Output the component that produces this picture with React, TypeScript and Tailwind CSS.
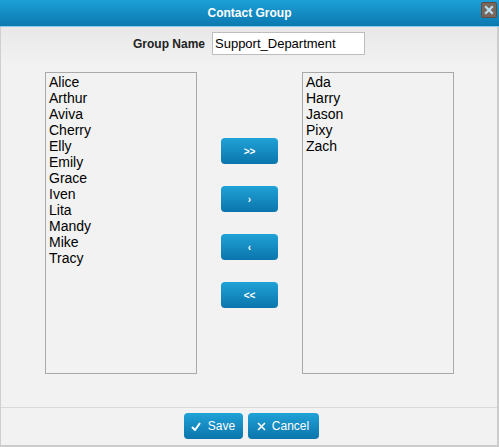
import React from 'react';

const leftNames = ['Alice', 'Arthur', 'Aviva', 'Cherry', 'Elly', 'Emily', 'Grace', 'Iven', 'Lita', 'Mandy', 'Mike', 'Tracy'];
const rightNames = ['Ada', 'Harry', 'Jason', 'Pixy', 'Zach'];

const blueBtn =
  'bg-gradient-to-b from-[#20a2d8] to-[#0a75ab] text-white rounded-[4px] flex items-center justify-center';

function NameList({ names }: { names: string[] }) {
  return (
    <div className="w-[152px] h-[302px] border border-[#a9a9a9] bg-[#f2f2f2] pl-[3px] pt-[1px]">
      {names.map((n) => (
        <div key={n} className="text-[14px] leading-4 text-black">
          {n}
        </div>
      ))}
    </div>
  );
}

export default function App() {
  const moves = ['>>', '›', '‹', '<<'];

  return (
    <div
      className="w-[499px] h-[447px] flex flex-col bg-[#f2f2f2] overflow-hidden"
      style={{ fontFamily: '"Liberation Sans", Arial, sans-serif' }}
    >
      {/* title bar */}
      <div className="relative h-[26px] shrink-0 bg-gradient-to-b from-[#1ca0d7] to-[#0b79b0] flex items-center justify-center">
        <span className="text-white text-[12px] font-bold">Contact Group</span>
        <div className="absolute right-[2px] top-[2px] w-[16px] h-[16px] rounded-[2px] bg-[#7a675c] border border-[#5d4d44] flex items-center justify-center">
          <svg width="10" height="10" viewBox="0 0 10 10">
            <path d="M2 2 L8 8 M8 2 L2 8" stroke="#b8e0f4" strokeWidth="2.2" strokeLinecap="square" />
          </svg>
        </div>
      </div>
      <div className="h-[1px] shrink-0 bg-[#8ccbe9]" />

      <div className="flex-1 flex flex-col border-l border-l-[#cfcfcf] border-r-2 border-r-[#cccccc] border-b-2 border-b-[#cccccc] bg-gradient-to-b from-[#e8e8e8] to-[#f2f2f2] to-[40px]">
        {/* group name */}
        <div className="flex items-center justify-center gap-[7px] mt-[5px]">
          <span className="text-[12px] font-bold text-[#222]">Group Name</span>
          <div className="w-[153px] h-[23px] bg-white border border-[#bdbdbd] flex items-center pl-[2px] text-[13px] text-black">
            Support_Department
          </div>
        </div>

        {/* lists */}
        <div className="flex items-center justify-center gap-6 mt-[17px] ml-[1px]">
          <NameList names={leftNames} />
          <div className="flex flex-col gap-[22px]">
            {moves.map((m) => (
              <div key={m} className={`${blueBtn} w-[57px] h-[26px] text-[10px] font-bold`}>
                {m}
              </div>
            ))}
          </div>
          <NameList names={rightNames} />
        </div>

        {/* footer */}
        <div className="mt-[33px] border-t border-t-[#d9d9d9] flex justify-center gap-[5px] pt-[5px] pl-[4px]">
          <div className={`${blueBtn} w-[59px] h-[26px] gap-[7px] text-[12px]`}>
            <svg width="10" height="9" viewBox="0 0 10 9">
              <path d="M1 5 L4 8 L9 1" stroke="white" strokeWidth="2" fill="none" />
            </svg>
            Save
          </div>
          <div className={`${blueBtn} w-[71px] h-[26px] gap-[6px] text-[12px]`}>
            <svg width="9" height="9" viewBox="0 0 9 9">
              <path d="M1 1 L8 8 M8 1 L1 8" stroke="white" strokeWidth="1.6" />
            </svg>
            Cancel
          </div>
        </div>
      </div>
    </div>
  );
}
